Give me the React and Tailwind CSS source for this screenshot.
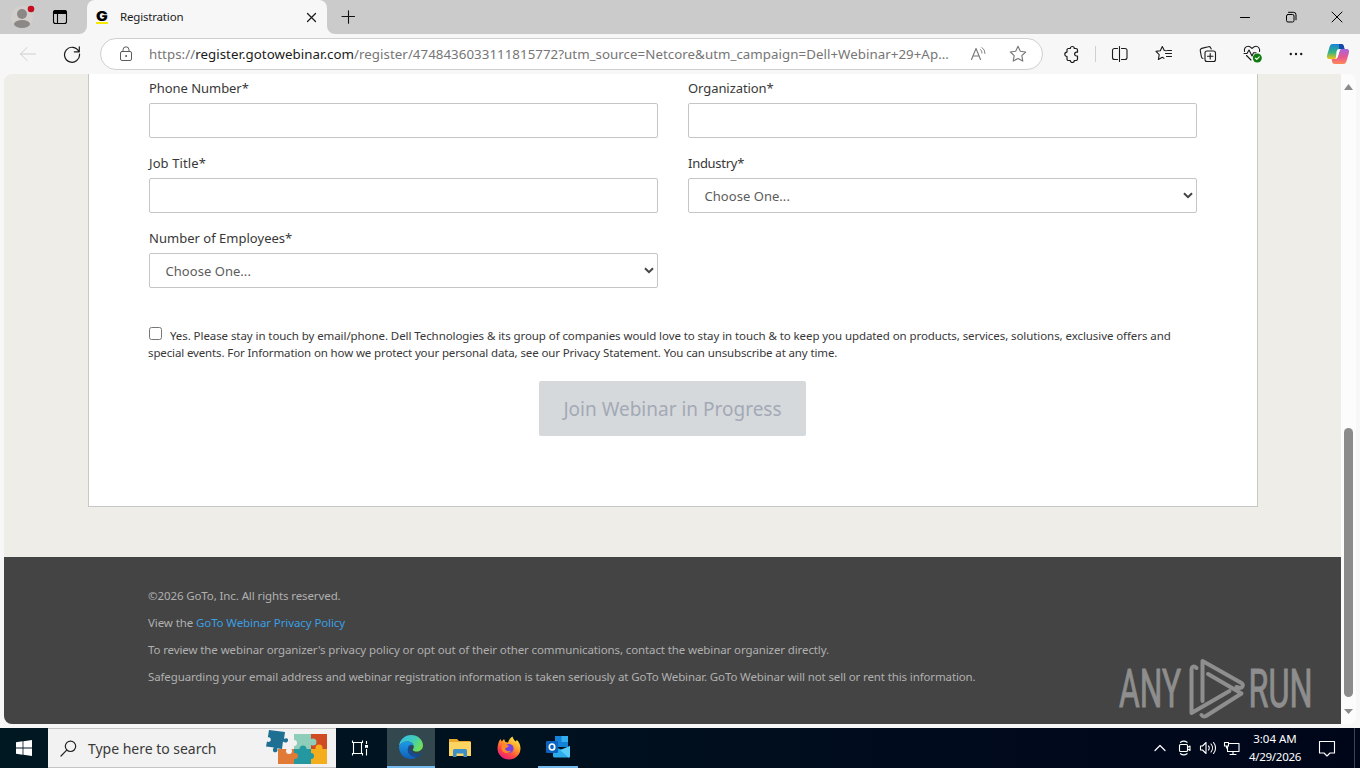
import React from 'react';

const Ico = ({ w = 20, h = 20, className = '', children, sw = 1.2 }) => (
  <svg width={w} height={h} viewBox={`0 0 ${w} ${h}`} className={`shrink-0 ${className}`} fill="none" stroke="currentColor" strokeWidth={sw} strokeLinecap="round" strokeLinejoin="round">
    {children}
  </svg>
);

function TitleBar() {
  return (
    <div className="flex h-[34px] shrink-0 items-stretch bg-[#cbcbcb]">
      <div className="flex w-[79px] items-center pl-[10px]">
        <svg width="26" height="30" viewBox="0 0 26 30" className="shrink-0">
          <circle cx="12" cy="15" r="11" fill="#d2cfcd" />
          <circle cx="12" cy="12" r="5" fill="#8b8886" />
          <ellipse cx="12" cy="22" rx="8" ry="4" fill="#8b8886" />
          <circle cx="21" cy="7" r="3.3" fill="#c50f1f" />
        </svg>
        <Ico w={16} h={16} className="ml-4 text-black" sw={1.1}>
          <rect x="1.5" y="1.5" width="13" height="13" rx="2" />
          <path d="M1.500 3.500a2 2 0 0 1 2-2h9a2 2 0 0 1 2 2v1h-13z" fill="currentColor" />
          <path d="M5.500 5v9" />
        </Ico>
      </div>
      <svg width="8" height="34" viewBox="0 0 8 34" className="shrink-0"><path d="M8 26a8 8 0 0 1-8 8h8z" fill="#f7f7f7" /></svg>
      <div className="flex w-[240px] items-center rounded-t-lg bg-[#f7f7f7] pl-[9px] pr-[10px]">
        <span className="flex h-[14px] w-3 items-center justify-center border-b-2 border-[#f5e900] font-['Inter'] text-[13px] font-black leading-3 text-black"><span className="scale-x-120">G</span></span>
        <span className="ml-3 flex-1 whitespace-nowrap text-[11.5px] leading-4 tracking-[-0.18px] text-[#1b1b1b]">Registration</span>
        <Ico w={11} h={11} className="text-[#1b1b1b]"><path d="M1.500 1.500l8 8M9.500 1.500l-8 8" /></Ico>
      </div>
      <svg width="8" height="34" viewBox="0 0 8 34" className="shrink-0"><path d="M0 26a8 8 0 0 0 8 8H0z" fill="#f7f7f7" /></svg>
      <div className="flex flex-1 items-center pl-[6px]">
        <Ico w={14} h={14} className="text-[#111]" sw={1.1}><path d="M7.500 .8v12.400M1 6.500h12.500" /></Ico>
      </div>
      <div className="flex items-center gap-[34px] pr-[17px] text-black">
        <Ico w={12} h={12} sw={1}><path d="M1.500 6.500h9" /></Ico>
        <Ico w={12} h={12} sw={1}><rect x="1.500" y="3.500" width="7.500" height="7.500" rx="1.500" /><path d="M3.500 1.300h5a2.500 2.500 0 0 1 2.500 2.500v5" /></Ico>
        <Ico w={12} h={12} sw={1}><path d="M1 1l10 10M11 1L1 11" /></Ico>
      </div>
    </div>
  );
}

function NavBar() {
  return (
    <div className="flex h-[40px] shrink-0 items-center bg-[#f7f7f7] pl-[19px] pr-[10px] text-[#1b1b1b]">
      <Ico w={18} h={16} className="text-[#cfcfcf]" sw={1}><path d="M16.500 8h-15M8 1.500L1.500 8 8 14.500" /></Ico>
      <Ico w={18} h={18} className="ml-[26px]" sw={1.2}><path d="M15.800 6.500A7.500 7.500 0 1 0 16.500 9M16.300 1.800V6.800h-5" /></Ico>
      <div className="ml-[19px] flex h-8 w-[943px] items-center rounded-full border border-[#cfcfcf] bg-white pl-[18px] pr-[15px] text-[#767676]">
        <Ico w={14} h={16} className="text-[#5c5c5c]" sw={1}><rect x="1.500" y="5.500" width="11" height="9" rx="1.500" /><path d="M4 5.300V3.800a3 3 0 0 1 6 0v1.500" /><circle cx="7" cy="10" r=".5" fill="currentColor" /></Ico>
        <div className="ml-4 flex-1 whitespace-nowrap text-[13.3px] leading-5 tracking-[0.045px]">
          https://<span className="text-[#1b1b1b]">register.gotowebinar.com</span>/register/4748436033111815772?utm_source=Netcore&amp;utm_campaign=Dell+Webinar+29+Ap...
        </div>
        <Ico w={17} h={16} sw={1.1}><path d="M1.500 13.500L6 2.500l4.500 11M3 10h6" /><path d="M10.500 3.500a4 4 0 0 1 1.500 3.500M12 1.500a7 7 0 0 1 3 6" strokeWidth=".9" /></Ico>
        <Ico w={18} h={18} className="ml-[22px]" sw={1.1}><path d="M9 1.300l2.300 5 5.400.7-3.900 3.700 1 5.400L9 13.500l-4.800 2.600 1-5.400L1.300 7l5.400-.7z" /></Ico>
      </div>
      <Ico w={18} h={18} className="ml-[20px]" sw={1.2}><path d="M5.500 3.500h1.800a2 2 0 0 1 4 0H13a1.500 1.500 0 0 1 1.500 1.500v2.200h-1a1.900 1.900 0 1 0 0 3.800h1V14a1.500 1.500 0 0 1-1.500 1.500h-1.700a2 2 0 0 1-4 0H5.500A1.500 1.500 0 0 1 4 14v-2.500a2.200 2.200 0 0 1 0-4.400V5a1.500 1.500 0 0 1 1.500-1.500z" /></Ico>
      <div className="ml-[14px] h-4 w-px bg-[#d0d0d0]" />
      <Ico w={18} h={18} className="ml-[15px]" sw={1.1}><path d="M6.500 3.500h-3a2 2 0 0 0-2 2v7a2 2 0 0 0 2 2h3M10.500 3.500h3.500a2 2 0 0 1 2 2v7a2 2 0 0 1-2 2h-3.500M8.500 1.500v15" /></Ico>
      <Ico w={18} h={18} className="ml-[26px]" sw={1.1}><path d="M11.500 5.800l-2.200-.3L7.300 1.500 5.300 5.700l-4.300.7 3.200 3.200-.8 4.900 3.900-2.200 1.700.9M10.500 8.500h6M11.500 11.500h5M12.500 5.500h4" /></Ico>
      <Ico w={18} h={18} className="ml-[26px]" sw={1.1}><rect x="6" y="6" width="10.500" height="10.500" rx="2" /><path d="M11.200 8.500v5.500M8.500 11.200H14M4 13.500c-1-.2-1.500-1-1.700-2L1.300 5.800a2 2 0 0 1 1.500-2.400l6.500-1.600a2 2 0 0 1 2.500 1.200l.4 1" /></Ico>
      <svg width="20" height="20" viewBox="0 0 20 20" className="ml-[26px] shrink-0" fill="none" stroke="#1b1b1b" strokeWidth="1.1" strokeLinejoin="round" strokeLinecap="round">
        <path d="M1.500 7.500C.7 4 3 2.200 5.200 2.200S8 3.500 9 4.500c1-1 2-2.300 4-2.300s4.300 2.300 3.500 5.300M1 9.500h3L6 6l3 6 1.500-3.200H13M3.500 11.500L8 16" />
        <circle cx="14.300" cy="14" r="4.500" fill="#107c10" stroke="none" />
        <path d="M12.300 14.100l1.400 1.300 2.500-2.600" stroke="#fff" />
      </svg>
      <Ico w={14} h={6} className="ml-[26px]"><g fill="currentColor" stroke="none"><circle cx="1.800" cy="3" r="1.200" /><circle cx="7" cy="3" r="1.200" /><circle cx="12.200" cy="3" r="1.200" /></g></Ico>
      <svg width="24" height="22" viewBox="0 0 24 22" className="ml-auto shrink-0">
        <defs>
          <linearGradient id="cpa" x1="0" y1="0" x2="0" y2="1"><stop stopColor="#1683d8" /><stop offset=".55" stopColor="#35b484" /><stop offset="1" stopColor="#f4c315" /></linearGradient>
          <linearGradient id="cpb" x1="0" y1="0" x2="0" y2="1"><stop stopColor="#a765e0" /><stop offset=".55" stopColor="#e9588f" /><stop offset="1" stopColor="#ff8955" /></linearGradient>
        </defs>
        <path d="M6.500 1h9c1.500 0 2 1 2.400 2.500L18.500 6h-3c-2 0-3 1-3.500 3l-1.500 5c-.5 1.500-1.200 2-2.500 2H3.500C1 16 .5 14 1.300 11.500l2.200-7.500C4 2 5 1 6.500 1z" fill="url(#cpa)" />
        <path d="M17.500 21h-9C7 21 6.500 20 6.100 18.500L5.500 16h3c2 0 3-1 3.500-3l1.500-5c.5-1.500 1.200-2 2.500-2h4.500c2.500 0 3 2 2.200 4.500L20.500 18c-.5 2-1.500 3-3 3z" fill="url(#cpb)" />
        <path d="M13 1h2.500c1.500 0 2 1 2.400 2.500L18.500 6h-3c-1 0-1.800.3-2.400.8z" fill="#174aa8" />
        <path d="M10.500 8.500c.5-1.700 1.500-2.500 3-2.500h1.300c-.7.500-1 1-1.300 2l-1.500 5c-.5 1.800-1.300 2.700-2.800 3H8.500c1 0 1.300-.7 1.500-1.500z" fill="#fff" />
      </svg>
    </div>
  );
}

const Label = ({ children, cls }) => (
  <div className={`mb-[6px] h-[18px] whitespace-nowrap text-[13px] leading-[18px] text-[#383838] ${cls}`}>{children}</div>
);
const Input = () => <div className="h-[35px] rounded-[2px] border border-[#c3c5c7] bg-white" />;
const Select = () => (
  <div className="flex h-[35px] items-center rounded-[2px] border border-[#c3c5c7] bg-white pl-[15.500px] pr-[3px] text-[13px] tracking-[0.04px] text-[#5c5c5c]">
    <span className="flex-1 pt-[2px]">Choose One...</span>
    <svg width="10" height="7" viewBox="0 0 10 7" className="mb-px" fill="none" stroke="#444" strokeWidth="2"><path d="M1 1.200l4 4 4-4" /></svg>
  </div>
);

function Watermark() {
  return (
    <svg width="204" height="80" viewBox="0 0 204 80" className="absolute right-[20px] top-[98px] overflow-visible">
      <g fill="#8e8e8e" stroke="#8e8e8e" strokeWidth="1" fontFamily="Roboto, sans-serif" fontSize="53">
        <text x="2" y="52" textLength="62" lengthAdjust="spacingAndGlyphs">ANY</text>
        <text x="131.500" y="52" textLength="64" lengthAdjust="spacingAndGlyphs">RUN</text>
      </g>
      <g fill="none" stroke="#8e8e8e" strokeWidth="4" strokeLinecap="round" strokeLinejoin="round">
        <path d="M79.500 13c-3-3-5-1-5 1.500V58l38-22" />
        <path d="M85.500 46V6l39 22c2.500 2 1 5-2 5l-3-1" />
        <path d="M91 19l33.500 19.500L89 61c-2 1-3.500.5-4.500-1" />
      </g>
    </svg>
  );
}

function Page() {
  return (
    <div className="flex min-h-0 flex-1 bg-[#f7f7f7] px-1 pb-1">
      <div className="flex min-w-0 flex-1 overflow-hidden rounded-lg bg-[#fcfcfc]">
        <div className="flex w-[1337px] flex-col bg-[#eeede7]">
          <div className="ml-[84px] h-[433px] w-[1170px] border-x border-b border-[#c5c8c5] bg-white pl-[60px] pr-[60px] pt-[5px]">
            <div className="grid grid-cols-[509px_509px] gap-x-[30px] gap-y-4">
              <div><Label cls="tracking-[-0.05px]">Phone Number*</Label><Input /></div>
              <div><Label cls="tracking-[-0.07px]">Organization*</Label><Input /></div>
              <div><Label cls="tracking-[0.1px]">Job Title*</Label><Input /></div>
              <div><Label cls="tracking-[-0.28px]">Industry*</Label><Select /></div>
              <div><Label cls="tracking-[0.02px]">Number of Employees*</Label><Select /></div>
            </div>
            <div className="mt-[39px] whitespace-nowrap text-[11.5px] leading-[17px] text-[#383838]">
              <div className="flex tracking-[-0.078px]">
                <span className="mr-2 h-[13px] w-[13px] rounded-[2.5px] border border-[#767676] bg-white" />
                Yes. Please stay in touch by email/phone. Dell Technologies &amp; its group of companies would love to stay in touch &amp; to keep you updated on products, services, solutions, exclusive offers and
              </div>
              <div className="-ml-px tracking-[-0.13px]">special events. For Information on how we protect your personal data, see our Privacy Statement. You can unsubscribe at any time.</div>
            </div>
            <div className="ml-[390px] mt-5 flex h-[55px] w-[267px] items-center justify-center whitespace-nowrap rounded-[2px] bg-[#d5d9dc] pt-[2px] text-[19px] text-[#a3a9b5]">Join Webinar in Progress</div>
          </div>
          <div className="relative mt-[50px] flex-1 bg-[#444] pl-[144px] pt-[30px] text-[11.5px] leading-[17px] text-[#b0b0b0]">
            <div className="flex flex-col gap-[10px] whitespace-nowrap">
              <p className="tracking-[-0.105px]">©2026 GoTo, Inc. All rights reserved.</p>
              <p className="tracking-[-0.1px]">View the <span className="text-[#3b9fe3]">GoTo Webinar Privacy Policy</span></p>
              <p className="tracking-[-0.108px]">To review the webinar organizer's privacy policy or opt out of their other communications, contact the webinar organizer directly.</p>
              <p className="tracking-[-0.123px]">Safeguarding your email address and webinar registration information is taken seriously at GoTo Webinar. GoTo Webinar will not sell or rent this information.</p>
            </div>
            <Watermark />
          </div>
        </div>
        <div className="flex flex-1 flex-col items-center py-[10px]">
          <svg width="9" height="6" viewBox="0 0 9 6"><path d="M4.500 0L9 6H0z" fill="#8b8b8b" /></svg>
          <div className="mt-[338px] h-[269px] w-[9px] rounded-full bg-[#8b8b8b]" />
          <svg width="9" height="5" viewBox="0 0 9 5" className="mt-3"><path d="M0 0h9L4.500 5z" fill="#8b8b8b" /></svg>
        </div>
      </div>
    </div>
  );
}

const Slot = ({ children, cls = '' }) => <div className={`flex h-10 items-center justify-center ${cls}`}>{children}</div>;

function Taskbar() {
  return (
    <div className="flex h-10 shrink-0 items-center bg-linear-to-r from-[#001822] to-[#00061a] text-white">
      <Slot cls="w-12">
        <svg width="16" height="16" viewBox="0 0 16 16" fill="#fff"><path d="M0 2.200l6.600-.9v6.300H0zM7.400 1.200L16 0v7.600H7.400zM0 8.400h6.600v6.300L0 13.800zM7.400 8.400H16V16l-8.600-1.200z" /></svg>
      </Slot>
      <div className="flex h-10 w-[288px] items-center border-y border-[#c4c4c4] bg-[#f2f2f2] pl-3 text-[#3a3a3a]">
        <Ico w={17} h={17} className="text-[#222]"><circle cx="10.500" cy="6.300" r="5.200" /><path d="M6.700 10.200L1 16" /></Ico>
        <span className="ml-[11px] w-[178px] whitespace-nowrap text-[14px] tracking-[-0.02px]">Type here to search</span>
        <svg width="64" height="38" viewBox="0 0 64 38" className="shrink-0">
          <path d="M12 20h19v15H12z" fill="#e07a36" />
          <path d="M28 5h17v16H28z" fill="#8fcdbb" />
          <path d="M45 5h16v16H45z" fill="#d04a22" />
          <path d="M28 20h18v15H28z" fill="#2398a0" />
          <path d="M45 20h16v15H45z" fill="#f4ad1c" />
          <circle cx="47" cy="13" r="3.500" fill="#8fcdbb" />
          <circle cx="37" cy="20" r="3.500" fill="#2398a0" />
          <circle cx="53" cy="19" r="3.500" fill="#f4ad1c" />
          <circle cx="29" cy="27" r="3" fill="#e07a36" />
          <circle cx="45" cy="27" r="3" fill="#2398a0" />
          <circle cx="28" cy="14" r="3" fill="#f2f2f2" />
          <circle cx="23" cy="22" r="3" fill="#f2f2f2" />
          <path d="M3 1l16 2-1 7c2-1.500 4.500-1 4 1.500S19 14 17 12.500L16 20l-5-.8c1.500 2.500-.5 4.500-2.500 4s-2-3.500-.5-4.700L0 17.500l1-5c2 1 3.800 0 3.800-1.800S3.500 7.500 1.800 8.500z" fill="#1f6f93" />
        </svg>
      </div>
      <Slot cls="w-[51px] pr-[3px]">
        <svg width="18" height="16" viewBox="0 0 18 16" fill="none" stroke="#fff" strokeWidth="1.100"><path d="M1.500.500v2h10v-2M1.500 15.500v-2h10v2M2.500 2.500v11M10.500 2.500v11M15.500 1v3M15.500 9v6.500" /><path d="M14 5h3v2.800h-3z" fill="#fff" stroke="none" /></svg>
      </Slot>
      <Slot cls="w-12 border-b-2 border-[#76b9ed] bg-[#33474f]">
        <svg width="24" height="24" viewBox="0 0 24 24">
          <defs>
            <linearGradient id="e1" x1="0" y1="0" x2="1" y2=".5"><stop stopColor="#35b8f0" /><stop offset=".6" stopColor="#3fcdb8" /><stop offset="1" stopColor="#6fdf5a" /></linearGradient>
            <linearGradient id="e2" x1="0" y1="0" x2="0" y2="1"><stop stopColor="#1d9be6" /><stop offset="1" stopColor="#0f5fb8" /></linearGradient>
          </defs>
          <path d="M0 11C1 4 6 0 12 0c7 0 12 5 12 10.500 0 3.500-3 6-6 6-2.500 0-4.200-.8-4.200-1.800 0-.7 1-1.200 1-3C14.800 9 12 6.500 8.500 6.500 4.500 6.500 1.500 8.500 0 11z" fill="url(#e1)" />
          <path d="M0 11.500C1.500 8 5 6.300 8.500 6.500c3.300.2 5.500 2 6 4C13 9 8.800 10.500 8.800 14.500c0 5 5 8 9.200 7.200-2 1.600-4 2.300-6 2.300C5 24 0 18.500 0 11.500z" fill="url(#e2)" />
          <path d="M8.800 14.500c0-2.500 1.400-4.300 2.900-5C9.500 14 13.500 19 18 19c2 0 3.400-.5 4.300-1 .6-.2.800.2.500.7-1.200 1.800-2.800 3-4.800 3.700-4.500.3-9.200-3-9.200-7.900z" fill="#164b91" />
        </svg>
      </Slot>
      <Slot cls="w-[49px]">
        <svg width="22" height="20" viewBox="0 0 22 20"><path d="M0 1h8l2 2h11.500v15H0z" fill="#e8a92d" /><path d="M0 4h22v14H0z" fill="#fcd462" /><path d="M4 19v-6.500A1.500 1.500 0 0 1 5.500 11h11a1.500 1.500 0 0 1 1.500 1.500V19h-3.500v-3.500h-7V19z" fill="#3d8fc9" /></svg>
      </Slot>
      <Slot cls="w-[49px]">
        <svg width="24" height="24" viewBox="0 0 24 24">
          <defs><linearGradient id="ff" x1=".8" y1="0" x2=".2" y2="1"><stop stopColor="#fff14a" /><stop offset=".4" stopColor="#ff9a2a" /><stop offset=".7" stopColor="#ff4545" /><stop offset="1" stopColor="#e31587" /></linearGradient></defs>
          <path d="M3.500 3l1.200 2.500L7 3l1.500 3 2.500.5C12 3.500 13.500 1.500 15.500.500c.3 2 1.500 3.200 3 5L20 4c2.500 2.500 3.500 5.500 3.500 8.500 0 6.300-5.200 11-11.500 11S.5 18.800.5 12.500C.5 9 1.500 5.500 3.500 3z" fill="url(#ff)" />
          <circle cx="12" cy="12.500" r="4.600" fill="#7542e5" />
          <path d="M5 9c2.500-1 5-.5 7 1-1.500 1.500-3 1.500-4 2.500.5 2.500 3.500 3.500 6 2-1.500 4-9 3.500-9.500-2z" fill="#ff8a24" />
        </svg>
      </Slot>
      <Slot cls="ml-[5px] w-10 border-b-2 border-[#76b9ed] pr-px">
        <svg width="24" height="22" viewBox="0 0 24 22"><path d="M9 0h13v11H9z" fill="#1382d8" /><path d="M15.500 0H22v6h-6.500z" fill="#35b0ee" /><path d="M7 10l9 4 8-4v10a1.500 1.500 0 0 1-1.500 1.500h-14A1.500 1.500 0 0 1 7 20z" fill="#2cacea" /><path d="M24 10v10a1.500 1.500 0 0 1-1.500 1.500L14 14z" fill="#58cdf7" /><rect y="5" width="12" height="12" rx="1" fill="#0a63bd" /><ellipse cx="6" cy="11" rx="2.700" ry="3" fill="none" stroke="#fff" strokeWidth="1.700" /></svg>
      </Slot>
      <div className="ml-auto flex h-10 items-center">
        <Ico w={12} h={8} sw={1.200}><path d="M1 6.500l5-5 5 5" /></Ico>
        <Ico w={14} h={16} className="ml-3" sw={1.100}><rect x="1.500" y="4.500" width="8" height="7" rx="1" /><path d="M9.500 7.500l2.500-1.500v4.500L9.500 9M2.500 2.300c2-1.500 4.500-1.500 6.500 0M2.500 13.700c2 1.500 4.500 1.500 6.500 0" /></Ico>
        <Ico w={18} h={14} className="ml-[7px]" sw={1.1}><path d="M1.500 5h2L7 1.500v11L3.500 9h-2zM9.500 5c1 1 1 3 0 4M12 3c2 2.300 2 5.700 0 8M14.500 1.500c2.700 3 2.700 8 0 11" /></Ico>
        <Ico w={17} h={14} className="ml-[6px]" sw={1.1}><path d="M6.500 2.500h9.500v8H4.500V6M7 13.500h6M10 10.500v3M1.500 1.500h4v3.500h-4zM3.500 5v2" /></Ico>
        <div className="ml-[7px] flex w-[56px] flex-col items-center whitespace-nowrap text-[11.5px] leading-[18px]">
          <span className="tracking-[0px]">3:04 AM</span>
          <span className="tracking-[-0.27px]">4/29/2026</span>
        </div>
        <Ico w={18} h={17} className="ml-[15px]" sw={1.1}><path d="M1.500 1.500h15v11.500h-4.500l-3 3-3-3H1.500z" /></Ico>
        <div className="ml-[18px] mr-[5px] h-10 w-px bg-[#3c4353]" />
      </div>
    </div>
  );
}

export default function App() {
  return (
    <div className="flex h-[768px] w-[1360px] flex-col overflow-hidden bg-[#f7f7f7] font-['Noto_Sans','Open_Sans',sans-serif]">
      <TitleBar />
      <NavBar />
      <Page />
      <Taskbar />
    </div>
  );
}
